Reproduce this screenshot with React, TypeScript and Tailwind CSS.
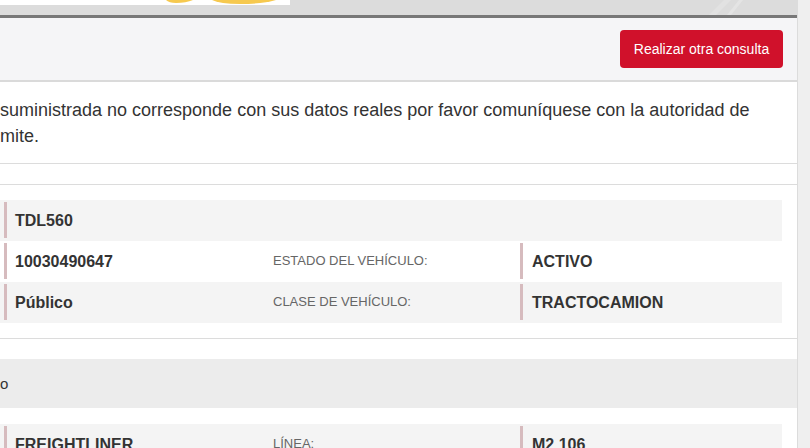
export default function App() {
  const rows = [
    { value: 'TDL560', label: '', detail: '', shaded: true },
    { value: '10030490647', label: 'ESTADO DEL VEHÍCULO:', detail: 'ACTIVO', shaded: false },
    { value: 'Público', label: 'CLASE DE VEHÍCULO:', detail: 'TRACTOCAMION', shaded: true },
  ]

  return (
    <div className="flex h-[448px] w-[810px] overflow-hidden bg-[#efefef] font-['Liberation_Sans',Arial,sans-serif] text-[#333]">
      <div className="flex w-[798px] shrink-0 flex-col border-r border-[#dcdcdc] bg-white">
        {/* Top banner */}
        <div className="flex h-[15px] shrink-0 bg-[#dcdcdc]">
          <svg width="290" height="5" viewBox="0 0 290 5" className="shrink-0">
            <rect width="290" height="5" fill="#ffffff" />
            <path d="M166 0 L193 0 Q186 3 176 3 Q169 3 166 0 Z" fill="#f6c94f" />
            <path d="M212 0 L276 0 Q262 4 240 4 Q220 4 212 0 Z" fill="#f6c94f" />
          </svg>
          <div className="flex-1" />
          <svg width="80" height="15" viewBox="0 0 80 15" className="mr-[48px] shrink-0">
            <path d="M40 15 L55 0 L62 0 L47 15 Z" fill="#e2e2e2" />
            <path d="M58 15 L70 0 L74 0 L62 15 Z" fill="#e4e4e4" />
          </svg>
        </div>
        <div className="h-[3px] shrink-0 bg-[#787878]" />

        {/* Toolbar */}
        <div className="flex h-[64px] shrink-0 items-center justify-end border-b-2 border-[#dadada] bg-[#f5f5f7] pr-[14px]">
          <button className="h-[38px] w-[163px] rounded-[4px] bg-[#d0112b] text-[14px] text-white">
            Realizar otra consulta
          </button>
        </div>

        {/* Notice */}
        <div className="h-[82px] shrink-0 border-b border-[#dcdcdc] pt-[15px] text-[18px] leading-[26px] text-[#333]">
          <p>suministrada no corresponde con sus datos reales por favor comuníquese con la autoridad de</p>
          <p>mite.</p>
        </div>

        <div className="h-[20px] shrink-0" />

        {/* Vehicle card */}
        <div className="shrink-0 border-y border-[#dcdcdc] pt-[15px] pr-[15px] pb-[15px]">
          {rows.map((row) => (
            <div
              key={row.value}
              className={`flex h-[41px] items-start ${row.shaded ? 'bg-[#f4f4f4]' : 'bg-white'}`}
            >
              <div className="flex w-[273px] pl-[4px]">
                <div className="mt-[2px] flex h-[36px] items-center border-l-[3px] border-[#d6bbbe] pt-[2px] pl-[8px] text-[16px] font-bold text-[#333]">
                  {row.value}
                </div>
              </div>
              <div className="flex h-[40px] w-[247px] items-center text-[13px] text-[#666]">
                {row.label}
              </div>
              {row.detail && (
                <div className="mt-[2px] flex h-[36px] items-center border-l-[3px] border-[#d6bbbe] pt-[2px] pl-[9px] text-[16px] font-bold text-[#333]">
                  {row.detail}
                </div>
              )}
            </div>
          ))}
        </div>

        <div className="h-[20px] shrink-0" />

        {/* Second section */}
        <div className="flex h-[49px] shrink-0 items-center bg-[#ececec] pt-[2px] text-[15px] text-[#333]">
          o
        </div>
        <div className="pt-[16px] pr-[15px]">
          <div className="flex h-[41px] items-start bg-[#f4f4f4]">
            <div className="flex w-[273px] pl-[4px]">
              <div className="mt-[2px] flex h-[36px] items-center border-l-[3px] border-[#d6bbbe] pt-[2px] pl-[8px] text-[16px] font-bold text-[#333]">
                FREIGHTLINER
              </div>
            </div>
            <div className="flex h-[40px] w-[247px] items-center text-[13px] text-[#666]">
              LÍNEA:
            </div>
            <div className="mt-[2px] flex h-[36px] items-center border-l-[3px] border-[#d6bbbe] pt-[2px] pl-[9px] text-[16px] font-bold text-[#333]">
              M2 106
            </div>
          </div>
        </div>
      </div>
    </div>
  )
}
